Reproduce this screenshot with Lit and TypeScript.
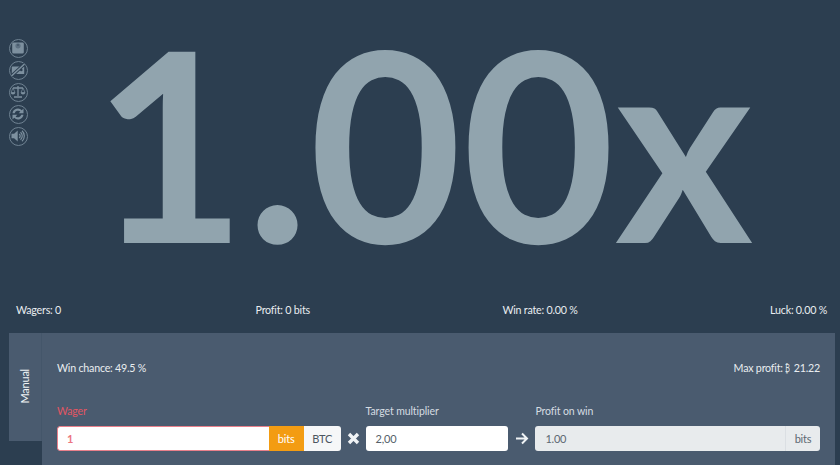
import { LitElement, html, css, svg } from "lit";
import { customElement } from "lit/decorators.js";

const icons = [
  svg`<path d="M5 4h9a1.300 1.300 0 0 1 1.300 1.300v8.400A1.300 1.300 0 0 1 14 15H5a1.300 1.300 0 0 1-1.300-1.300V5.300A1.300 1.300 0 0 1 5 4z" fill="currentColor"/><circle cx="9.500" cy="7.300" r="2.600" fill="#5d7082"/><path d="M9.500 5.600v1.800" stroke="#2c3e50" stroke-width=".8"/>`,
  svg`<rect x="3.300" y="6" width="12.400" height="7.500" rx=".6" fill="currentColor"/><circle cx="12.800" cy="9.500" r="1.300" fill="#2c3e50"/><path d="M3 15.500 16 3.500" stroke="#2c3e50" stroke-width="3.200"/><path d="M3 15.500 16 3.500" stroke="currentColor" stroke-width="1.500"/>`,
  svg`<path d="M9.500 3.500v10M5.500 14.500h8M4.500 5.500h10" stroke="currentColor" stroke-width="1.300" fill="none"/><path d="M4.500 5.500 2.500 10h4zM14.500 5.500l-2 4.500h4z" stroke="currentColor" stroke-width=".7" fill="none"/><path d="M2.300 10a2.200 2 0 0 0 4.400 0zM12.300 10a2.200 2 0 0 0 4.400 0z" fill="currentColor"/>`,
  svg`<path d="M4 8.700a5.500 5.500 0 0 1 9.300-3L15 4v4.800h-4.800l1.700-1.700a3.500 3.500 0 0 0-5.700 1.600zM15 10.300a5.500 5.500 0 0 1-9.300 3L4 15v-4.800h4.800l-1.700 1.700a3.500 3.500 0 0 0 5.700-1.600z" fill="currentColor"/>`,
  svg`<path d="M3 7.300h2.600l3.600-3.200v10.800l-3.600-3.200H3z" fill="currentColor"/><path d="M10.700 7.500a2.500 2.500 0 0 1 0 4M12 5.800a4.800 4.800 0 0 1 0 7.400M13.500 4.300a7 7 0 0 1 0 10.400" stroke="currentColor" stroke-width="1.200" fill="none"/>`,
];

@customElement("app-root")
export class AppRoot extends LitElement {
  static styles = css`
    :host { display: block; width: 840px; height: 465px; overflow: hidden; background: #2c3e50; font-family: Lato, "Liberation Sans", sans-serif; font-size: 10.700px; letter-spacing: -0.22px; color: #e9edf0; }
    * { box-sizing: border-box; }
    .hero { position: relative; height: 294px; display: flex; justify-content: center; }
    .mult { font-size: 264px; font-weight: 700; letter-spacing: 0; line-height: 282px; height: 282px; color: #91a4ae; white-space: nowrap; margin-left: 6px; }
    .tools { position: absolute; left: 9px; top: 39px; display: flex; flex-direction: column; gap: 3px; color: #7d909f; }
    .tool { width: 19px; height: 19px; border: 1.500px solid #6f8292; border-radius: 50%; display: block; }
    .tool svg { display: block; width: 16px; height: 16px; }
    .stats { height: 30px; margin-bottom: 9px; padding: 0 13px 0 16px; display: flex; justify-content: space-between; align-items: center; }
    .stats span:nth-child(2) { margin-left: 2px; }
    .lower { display: flex; height: 132px; }
    .tab { margin-left: 9px; width: 33px; height: 108px; background: #4a5b6f; border-right: 1px solid #44566a; display: flex; align-items: center; justify-content: center; }
    .tab span { writing-mode: vertical-rl; transform: rotate(180deg); font-size: 11px; color: #f0f3f5; margin: -1px 1px 0 0; }
    .panel { width: 793px; background: #4a5b6f; padding: 0 15px; }
    .info { display: flex; justify-content: space-between; height: 71px; padding-top: 28px; line-height: 14px; }
    .coin { display: inline-block; width: 6px; transform: scaleX(.62); transform-origin: left; }
    .fields { display: flex; align-items: flex-start; }
    .field { display: flex; flex-direction: column; gap: 8px; }
    .field label { font-size: 10.500px; letter-spacing: -0.1px; line-height: 14px; color: #d5dce2; }
    .field.err label { color: #e25663; }
    .wager { width: 284px; }
    .target { width: 143px; }
    .profit { width: 285px; }
    .group { display: flex; height: 25px; border-radius: 3px; overflow: hidden; font-size: 11px; line-height: 25px; }
    .val { flex: 1; padding-left: 10px; background: #fff; color: #555f69; }
    .wager .val { color: #ec7480; padding-left: 9px; border: 1px solid #e9808b; border-right: 0; border-radius: 3px 0 0 3px; line-height: 23px; font-weight: 700; }
    .unit { width: 35px; text-align: center; background: #f39c12; color: #fff; }
    .btc { width: 37px; text-align: center; background: #f6f7f8; color: #4b5560; }
    .profit .group { background: #e8ebed; color: #5d6872; }
    .profit .val { background: none; color: #5d6872; }
    .bits { width: 35px; text-align: center; border-left: 1px solid #dbdfe3; }
    .sep { height: 25px; margin-top: 22px; display: flex; align-items: center; justify-content: center; color: #f0f3f5; }
    .sep.x { width: 25px; }
    .sep.a { width: 27px; }
    .sep svg { display: block; }
  `;

  render() {
    return html`
      <div class="hero">
        <div class="tools">
          ${icons.map((i) => html`<span class="tool"><svg viewBox="1.500 1.500 16 16">${i}</svg></span>`)}
        </div>
        <div class="mult">1.00x</div>
      </div>
      <div class="stats">
        <span>Wagers: 0</span><span>Profit: 0 bits</span><span>Win rate: 0.00 %</span><span>Luck: 0.00 %</span>
      </div>
      <div class="lower">
        <div class="tab"><span>Manual</span></div>
        <div class="panel">
          <div class="info"><span>Win chance: 49.5 %</span><span>Max profit: <span class="coin">₿</span> 21.22</span></div>
          <div class="fields">
            <div class="field err wager">
              <label>Wager</label>
              <div class="group"><div class="val">1</div><div class="unit">bits</div><div class="btc">BTC</div></div>
            </div>
            <div class="sep x"><svg width="13" height="13" viewBox="0 0 13 13"><path d="M2 2l9 9M11 2l-9 9" stroke="currentColor" stroke-width="3.400"/></svg></div>
            <div class="field target">
              <label>Target multiplier</label>
              <div class="group"><div class="val">2,00</div></div>
            </div>
            <div class="sep a"><svg width="14" height="13" viewBox="0 0 14 13"><path d="M1 6.500h11M7 1.500l5 5-5 5" stroke="currentColor" stroke-width="2" fill="none"/></svg></div>
            <div class="field profit">
              <label>Profit on win</label>
              <div class="group"><div class="val">1.00</div><div class="bits">bits</div></div>
            </div>
          </div>
        </div>
      </div>
    `;
  }
}
